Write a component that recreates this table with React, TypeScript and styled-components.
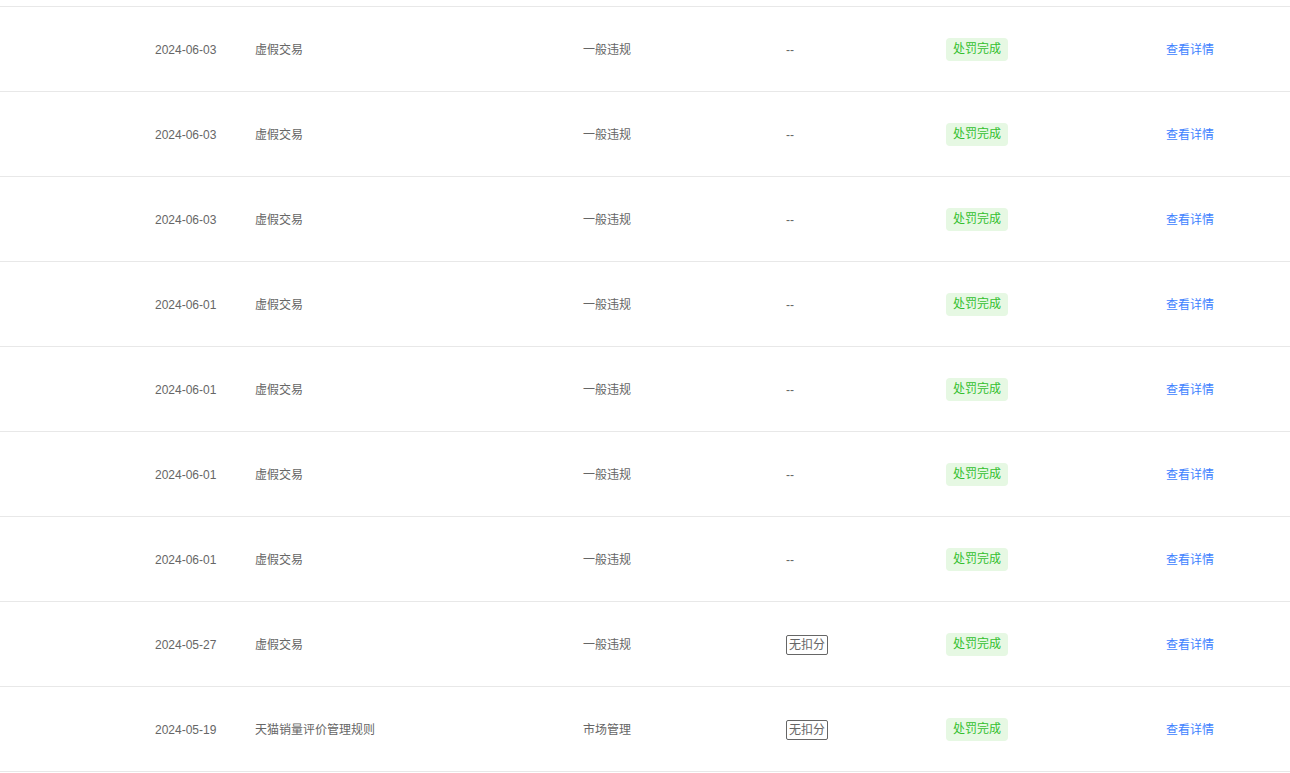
import styled, { createGlobalStyle } from "styled-components";

type Record = {
  date: string;
  reason: string;
  kind: string;
  noScore?: boolean;
};

const records: Record[] = [
  { date: "2024-06-03", reason: "虚假交易", kind: "一般违规" },
  { date: "2024-06-03", reason: "虚假交易", kind: "一般违规" },
  { date: "2024-06-03", reason: "虚假交易", kind: "一般违规" },
  { date: "2024-06-01", reason: "虚假交易", kind: "一般违规" },
  { date: "2024-06-01", reason: "虚假交易", kind: "一般违规" },
  { date: "2024-06-01", reason: "虚假交易", kind: "一般违规" },
  { date: "2024-06-01", reason: "虚假交易", kind: "一般违规" },
  { date: "2024-05-27", reason: "虚假交易", kind: "一般违规", noScore: true },
  { date: "2024-05-19", reason: "天猫销量评价管理规则", kind: "市场管理", noScore: true },
];

export default function App() {
  return (
    <>
      <GlobalStyle />
      <Table>
        <TopGap />
        {records.map((r, i) => (
          <Row key={i}>
            <Cell>{r.date}</Cell>
            <Cell>{r.reason}</Cell>
            <Cell>{r.kind}</Cell>
            <Cell>{r.noScore ? <ScoreTag>无扣分</ScoreTag> : "--"}</Cell>
            <Cell>
              <Status>处罚完成</Status>
            </Cell>
            <Cell>
              <Link>查看详情</Link>
            </Cell>
          </Row>
        ))}
      </Table>
    </>
  );
}

const GlobalStyle = createGlobalStyle`
  html, body {
    margin: 0;
    padding: 0;
    background: #fff;
    font-family: "Liberation Sans", Arial, "Noto Sans CJK SC", sans-serif;
  }
`;

const Table = styled.div`
  width: 1290px;
  display: flex;
  flex-direction: column;
`;

const TopGap = styled.div`
  height: 6px;
  border-bottom: 1px solid #e8e8e8;
`;

const Row = styled.div`
  display: grid;
  grid-template-columns: 100px 328px 203px 160px 220px 1fr;
  align-items: center;
  box-sizing: border-box;
  height: 85px;
  padding: 1px 0 0 155px;
  border-bottom: 1px solid #e8e8e8;
`;

const Cell = styled.div`
  font-size: 12px;
  color: #666;
  line-height: 18px;
  display: flex;
  align-items: center;
`;

const ScoreTag = styled.span`
  display: inline-block;
  border: 1px solid #666;
  border-radius: 2px;
  padding: 0 2px;
  line-height: 18px;
  font-size: 12px;
  color: #666;
`;

const Status = styled.span`
  display: inline-block;
  background: #e6f8e3;
  color: #33c02f;
  border-radius: 4px;
  padding: 0 7px;
  line-height: 23px;
  font-size: 12px;
`;

const Link = styled.a`
  color: #3d7fff;
  font-size: 12px;
  cursor: pointer;
`;
